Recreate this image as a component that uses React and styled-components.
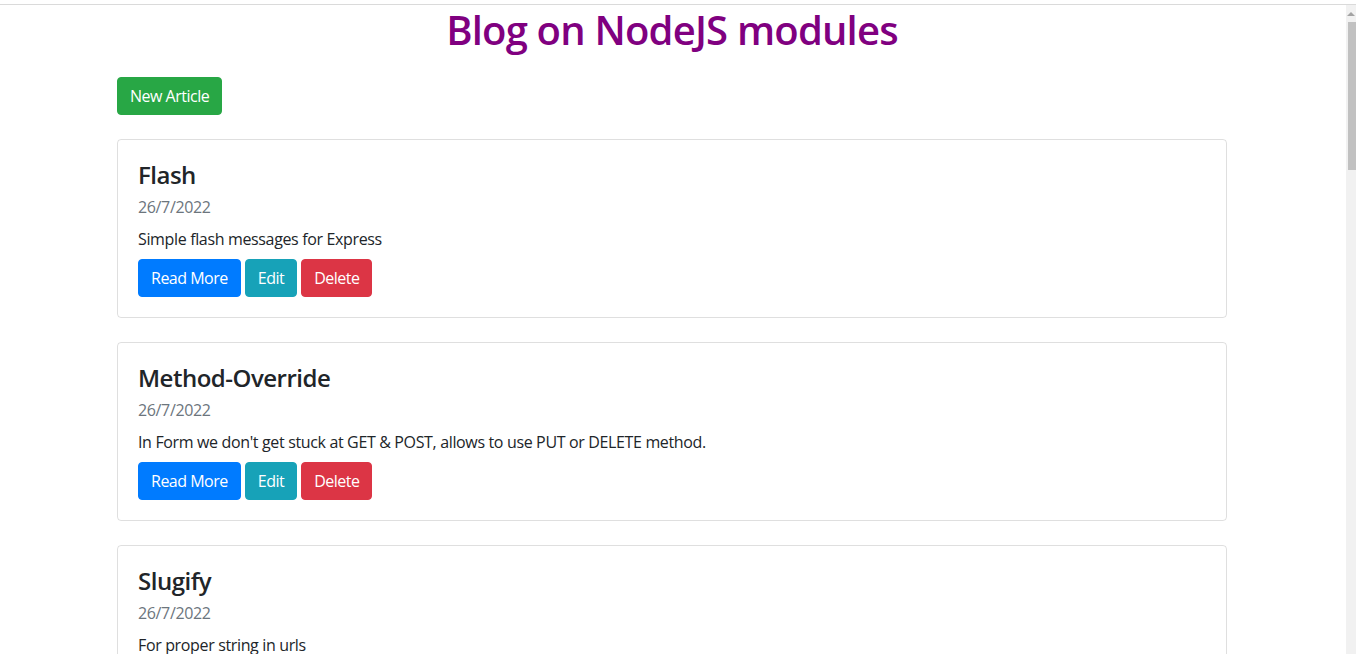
import styled, { createGlobalStyle } from "styled-components";

const articles = [
  {
    title: "Flash",
    date: "26/7/2022",
    text: "Simple flash messages for Express",
  },
  {
    title: "Method-Override",
    date: "26/7/2022",
    text: "In Form we don't get stuck at GET & POST, allows to use PUT or DELETE method.",
  },
  {
    title: "Slugify",
    date: "26/7/2022",
    text: "For proper string in urls",
  },
];

const colors = {
  success: "#28a745",
  primary: "#007bff",
  info: "#17a2b8",
  danger: "#dc3545",
};

const App = () => {
  return (
    <>
      <GlobalStyle />
      <Page>
        <TopEdge />
        <Viewport>
          <Main>
            <Container>
              <PageTitle>Blog on NodeJS modules</PageTitle>
              <Toolbar>
                <Button $variant="success">New Article</Button>
              </Toolbar>
              <CardList>
                {articles.map((article) => (
                  <Card key={article.title}>
                    <CardTitle>{article.title}</CardTitle>
                    <CardDate>{article.date}</CardDate>
                    <CardText>{article.text}</CardText>
                    <Actions>
                      <Button $variant="primary">Read More</Button>
                      <Button $variant="info">Edit</Button>
                      <Button $variant="danger">Delete</Button>
                    </Actions>
                  </Card>
                ))}
              </CardList>
            </Container>
          </Main>
          <Scrollbar>
            <ScrollArrow />
            <ScrollThumb />
          </Scrollbar>
        </Viewport>
      </Page>
    </>
  );
};

const GlobalStyle = createGlobalStyle`
  * {
    box-sizing: border-box;
  }
  body {
    margin: 0;
    background: #fff;
    color: #212529;
    font-family: "Open Sans", "Noto Sans", sans-serif;
    font-size: 16px;
    line-height: 1.5;
    letter-spacing: -0.35px;
  }
`;

const Page = styled.div`
  display: flex;
  flex-direction: column;
  height: 654px;
  overflow: hidden;
`;

const TopEdge = styled.div`
  height: 5px;
  flex-shrink: 0;
  border-bottom: 1px solid #dadada;
`;

const Viewport = styled.div`
  display: flex;
  flex: 1;
  min-height: 0;
`;

const Main = styled.main`
  flex: 1;
  overflow: hidden;
`;

const Scrollbar = styled.div`
  width: 12px;
  flex-shrink: 0;
  display: flex;
  flex-direction: column;
  align-items: flex-end;
  background: #f1f1f1;
  border-left: 2px solid #fff;
`;

const ScrollArrow = styled.div`
  width: 0;
  height: 0;
  margin: 7px 1px 6px 0;
  border-left: 4px solid transparent;
  border-right: 4px solid transparent;
  border-bottom: 4px solid #a3a3a3;
`;

const ScrollThumb = styled.div`
  width: 8px;
  height: 148px;
  background: #c1c1c1;
`;

const Container = styled.div`
  max-width: 1140px;
  margin: 0 auto;
  padding: 0 15px;
`;

const PageTitle = styled.h1`
  margin: 0;
  padding-top: 1px;
  text-align: center;
  color: purple;
  font-size: 40px;
  font-weight: 600;
  line-height: 1.2;
  letter-spacing: -0.8px;
`;

const Toolbar = styled.div`
  display: flex;
  margin: 23px 0 24px;
`;

const CardList = styled.div`
  display: flex;
  flex-direction: column;
  gap: 24px;
`;

const Card = styled.article`
  padding: 21px 20px 20px;
  border: 1px solid rgba(0, 0, 0, 0.125);
  border-radius: 4px;
`;

const CardTitle = styled.h4`
  margin: 0 0 8px;
  font-size: 24px;
  font-weight: 600;
  line-height: 1.2;
  letter-spacing: -0.5px;
`;

const CardDate = styled.h6`
  margin: 0 0 10px;
  color: #6c757d;
  font-size: 16px;
  font-weight: 400;
  line-height: 1.2;
`;

const CardText = styled.p`
  margin: 0 0 8px;
`;

const Actions = styled.div`
  display: flex;
  gap: 4px;
`;

const Button = styled.button`
  padding: 6px 12px;
  border: 1px solid ${({ $variant }) => colors[$variant]};
  border-radius: 4px;
  background: ${({ $variant }) => colors[$variant]};
  color: #fff;
  font-family: inherit;
  font-size: 16px;
  line-height: 1.5;
  letter-spacing: -0.5px;
  cursor: pointer;
`;

export default App;
